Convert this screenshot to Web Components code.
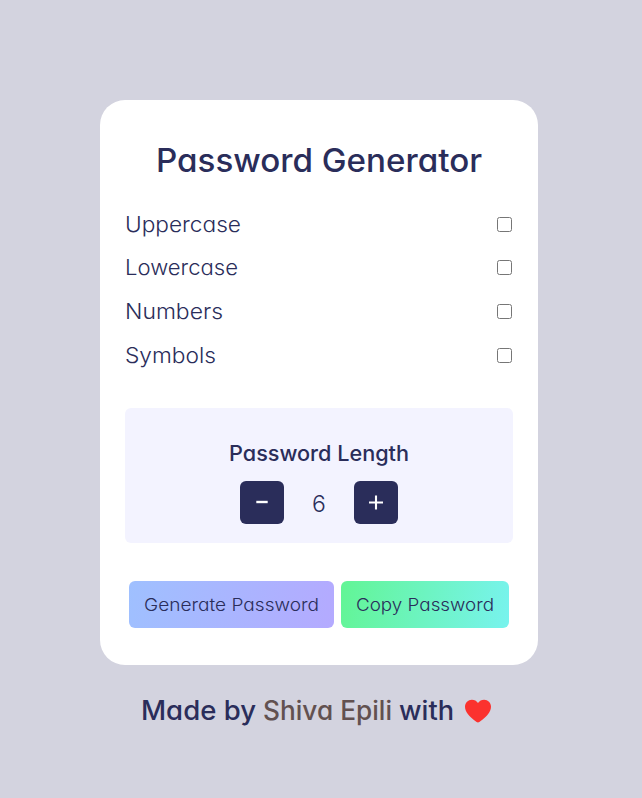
<!DOCTYPE html>
<html lang="en">
<head>
<meta charset="utf-8">
<title>Password Generator</title>
<style>
html,body{margin:0;height:100%}
body{background:#d3d3df;color:#2a2d5a;font-family:Inter,"Open Sans",sans-serif;font-feature-settings:"cv11";overflow:hidden}
</style>
</head>
<body>
<password-app></password-app>
<script>
const define=(name,html,setup)=>customElements.define(name,class extends HTMLElement{
  constructor(){super();this.attachShadow({mode:"open"}).innerHTML=html;}
  connectedCallback(){if(setup)setup(this,this.shadowRoot);}
});

// A single line of text, widened so that it fills the given width.
define("wide-text",`<style>
:host{display:inline-block;white-space:nowrap;text-align:left}
span{display:inline-block;transform-origin:0 50%}
</style><span><slot></slot></span>`,(el,root)=>{
  const w=+el.getAttribute("width"),s=root.querySelector("span");
  el.style.width=w+"px";
  s.style.transform="scaleX("+w/s.getBoundingClientRect().width+")";
});

define("option-row",`<style>
:host{display:flex;align-items:center;justify-content:space-between;height:43.6px;font-size:21.3px;font-weight:330;padding-right:1px}
::slotted(*){margin-bottom:2px}
input{width:15px;height:15px;margin:0 0 1px}
</style><slot></slot><input type="checkbox">`);

define("step-button",`<style>
:host{display:block;width:44px;height:43px}
button{display:flex;align-items:center;justify-content:center;width:100%;height:100%;padding:0;border:0;border-radius:6px;background:#2a2d5a;color:#fff}
::slotted(svg){display:block}
</style><button><slot></slot></button>`);

define("length-panel",`<style>
:host{display:flex;flex-direction:column;align-items:center;height:135px;box-sizing:border-box;padding-top:30px;border-radius:6px;background:#f3f3ff}
h2{margin:0;font-size:21.3px;line-height:30px;font-weight:500}
.steps{display:flex;align-items:center;margin-top:13px}
.value{width:70px;text-align:center;font-size:23px;font-weight:300;line-height:43px;padding-top:2px;height:43px;box-sizing:border-box}
</style>
<h2><wide-text width="180">Password Length</wide-text></h2>
<div class="steps">
<step-button><svg width="16" height="16" viewBox="0 0 16 16"><path d="M2.3 7H13.7" stroke="#fff" stroke-width="2.4"/></svg></step-button>
<div class="value">6</div>
<step-button><svg width="16" height="16" viewBox="0 0 16 16"><path d="M1 7.5H15M8 .5V14.5" stroke="#fff" stroke-width="2.1"/></svg></step-button>
</div>`);

define("gradient-button",`<style>
:host{display:block;height:47px}
button{display:block;width:100%;height:100%;border:0;padding:0 15px;border-radius:6px;background:var(--fill);color:#2a2d5a;font:330 17.5px/47px Inter,sans-serif;font-feature-settings:"cv11";text-align:left}
</style><button><slot></slot></button>`);

define("heart-icon",`<style>:host,svg{display:block}</style>
<svg width="26" height="24" viewBox="0 0 26 24"><path fill="#fb322e" d="M13 23.5C11.5 23.2 6 18.8 3.4 15.7C1.2 13 0 10.5 0 7.7C0 3.7 3.1.7 6.9.7C9.4.7 11.7 1.9 13 4C14.3 1.9 16.6.7 19.1.7C22.9.7 26 3.7 26 7.7C26 10.5 24.8 13 22.6 15.7C20 18.8 14.5 23.2 13 23.5Z"/></svg>`);

define("password-card",`<style>
:host{display:block;box-sizing:border-box;width:438px;height:565px;margin-left:100px;padding:36px 25px 0;background:#fff;border-radius:25px}
h1{margin:0 0 30px;text-align:center;font-size:32px;line-height:49px;font-weight:500;height:36px}
.options{padding-top:1px;height:206px;box-sizing:border-box}
.actions{display:flex;gap:7px;margin:38px 4px 0}
.gen{width:205px;--fill:linear-gradient(100deg,#9fc0ff,#b4aaff)}
.copy{width:168px;--fill:linear-gradient(100deg,#62f595,#78f3ee)}
</style>
<h1><wide-text width="326">Password Generator</wide-text></h1>
<div class="options">
<option-row><wide-text width="116">Uppercase</wide-text></option-row>
<option-row><wide-text width="113">Lowercase</wide-text></option-row>
<option-row><wide-text width="98">Numbers</wide-text></option-row>
<option-row><wide-text width="91">Symbols</wide-text></option-row>
</div>
<length-panel></length-panel>
<div class="actions">
<gradient-button class="gen"><wide-text width="175">Generate Password</wide-text></gradient-button>
<gradient-button class="copy"><wide-text width="138">Copy Password</wide-text></gradient-button>
</div>`);

define("made-by",`<style>
:host{display:flex;align-items:center;margin:25px 0 0 141px;height:40px;font-size:26.6px;font-weight:530}
.name{color:#625150;margin:0 7px}
heart-icon{margin:1px 0 0 11px}
</style>
<wide-text width="115">Made by</wide-text><wide-text class="name" width="129">Shiva Epili</wide-text><wide-text width="55">with</wide-text><heart-icon></heart-icon>`);

define("password-app",`<style>:host{display:block;box-sizing:border-box;height:798px;padding-top:100px}</style>
<password-card></password-card><made-by></made-by>`);
</script>
</body>
</html>
